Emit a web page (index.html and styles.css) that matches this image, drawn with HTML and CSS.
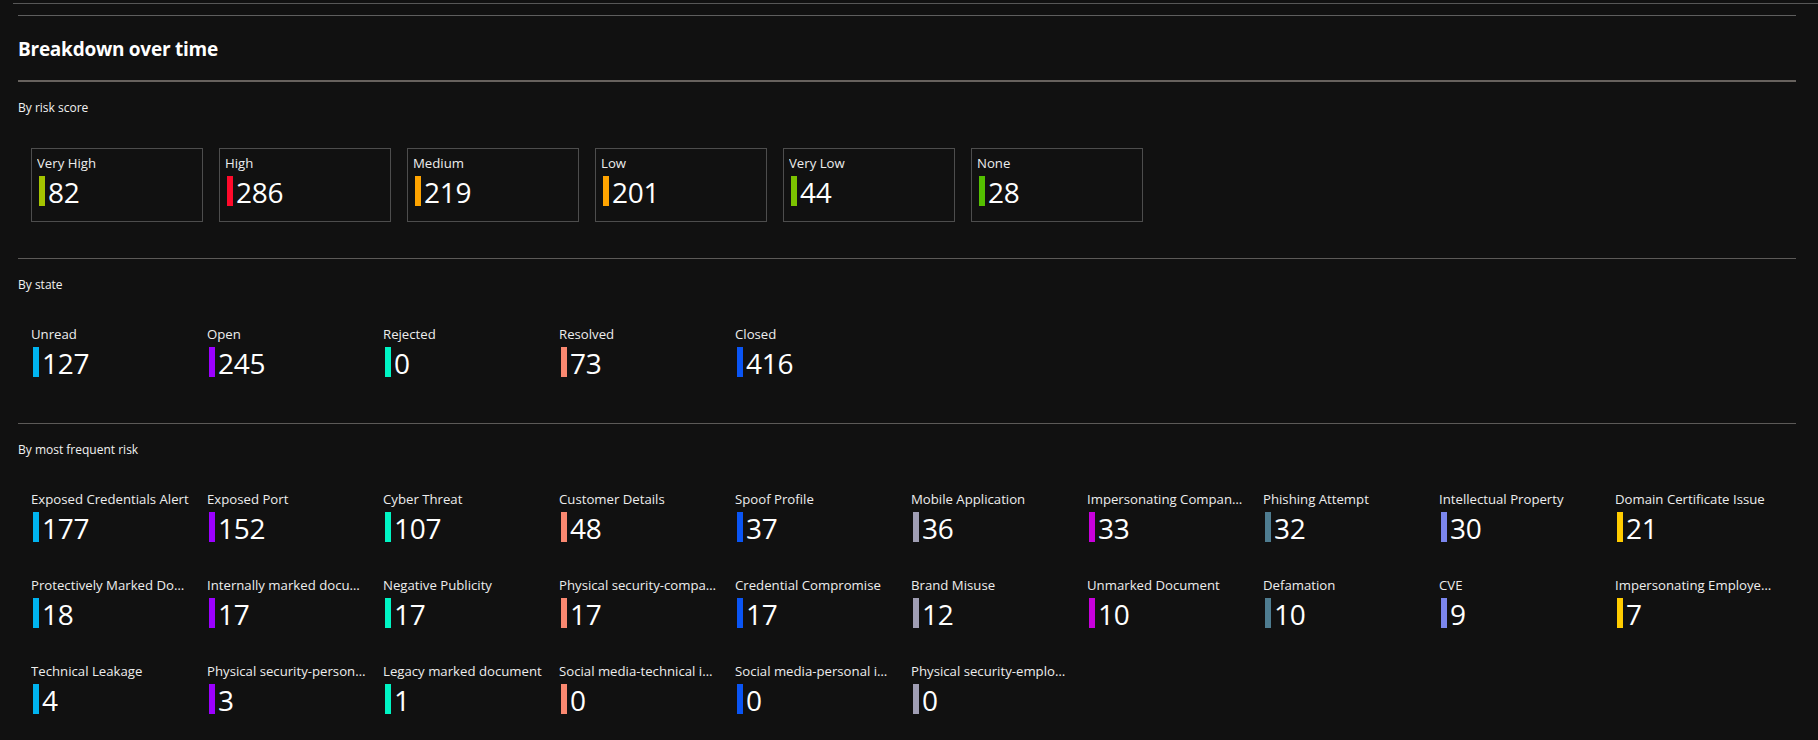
FILE: index.html
```html
<!DOCTYPE html>
<html lang="en">
<head>
<meta charset="utf-8">
<title>Breakdown over time</title>
<link rel="stylesheet" href="styles.css">
</head>
<body>
<div class="top-rule"></div>
<main class="panel">
  <h2 class="panel-title">Breakdown over time</h2>
  <div class="title-rule"></div>

  <section class="group">
    <h3 class="group-title">By risk score</h3>
    <div class="cards">
      <div class="card"><div class="label">Very High</div><div class="metric"><span class="bar c-vhigh"></span><span class="value">82</span></div></div>
      <div class="card"><div class="label">High</div><div class="metric"><span class="bar c-high"></span><span class="value">286</span></div></div>
      <div class="card"><div class="label">Medium</div><div class="metric"><span class="bar c-med"></span><span class="value">219</span></div></div>
      <div class="card"><div class="label">Low</div><div class="metric"><span class="bar c-low"></span><span class="value">201</span></div></div>
      <div class="card"><div class="label">Very Low</div><div class="metric"><span class="bar c-vlow"></span><span class="value">44</span></div></div>
      <div class="card"><div class="label">None</div><div class="metric"><span class="bar c-none"></span><span class="value">28</span></div></div>
    </div>
  </section>

  <section class="group group-state">
    <h3 class="group-title">By state</h3>
    <div class="items">
      <div class="item"><div class="label">Unread</div><div class="metric"><span class="bar k1"></span><span class="value">127</span></div></div>
      <div class="item"><div class="label">Open</div><div class="metric"><span class="bar k2"></span><span class="value">245</span></div></div>
      <div class="item"><div class="label">Rejected</div><div class="metric"><span class="bar k3"></span><span class="value">0</span></div></div>
      <div class="item"><div class="label">Resolved</div><div class="metric"><span class="bar k4"></span><span class="value">73</span></div></div>
      <div class="item"><div class="label">Closed</div><div class="metric"><span class="bar k5"></span><span class="value">416</span></div></div>
    </div>
  </section>

  <section class="group group-last">
    <h3 class="group-title">By most frequent risk</h3>
    <div class="items">
      <div class="item"><div class="label">Exposed Credentials Alert</div><div class="metric"><span class="bar k1"></span><span class="value">177</span></div></div>
      <div class="item"><div class="label">Exposed Port</div><div class="metric"><span class="bar k2"></span><span class="value">152</span></div></div>
      <div class="item"><div class="label">Cyber Threat</div><div class="metric"><span class="bar k3"></span><span class="value">107</span></div></div>
      <div class="item"><div class="label">Customer Details</div><div class="metric"><span class="bar k4"></span><span class="value">48</span></div></div>
      <div class="item"><div class="label">Spoof Profile</div><div class="metric"><span class="bar k5"></span><span class="value">37</span></div></div>
      <div class="item"><div class="label">Mobile Application</div><div class="metric"><span class="bar k6"></span><span class="value">36</span></div></div>
      <div class="item"><div class="label">Impersonating Compan…</div><div class="metric"><span class="bar k7"></span><span class="value">33</span></div></div>
      <div class="item"><div class="label">Phishing Attempt</div><div class="metric"><span class="bar k8"></span><span class="value">32</span></div></div>
      <div class="item"><div class="label">Intellectual Property</div><div class="metric"><span class="bar k9"></span><span class="value">30</span></div></div>
      <div class="item"><div class="label">Domain Certificate Issue</div><div class="metric"><span class="bar k10"></span><span class="value">21</span></div></div>

      <div class="item"><div class="label">Protectively Marked Do…</div><div class="metric"><span class="bar k1"></span><span class="value">18</span></div></div>
      <div class="item"><div class="label">Internally marked docu…</div><div class="metric"><span class="bar k2"></span><span class="value">17</span></div></div>
      <div class="item"><div class="label">Negative Publicity</div><div class="metric"><span class="bar k3"></span><span class="value">17</span></div></div>
      <div class="item"><div class="label">Physical security-compa…</div><div class="metric"><span class="bar k4"></span><span class="value">17</span></div></div>
      <div class="item"><div class="label">Credential Compromise</div><div class="metric"><span class="bar k5"></span><span class="value">17</span></div></div>
      <div class="item"><div class="label">Brand Misuse</div><div class="metric"><span class="bar k6"></span><span class="value">12</span></div></div>
      <div class="item"><div class="label">Unmarked Document</div><div class="metric"><span class="bar k7"></span><span class="value">10</span></div></div>
      <div class="item"><div class="label">Defamation</div><div class="metric"><span class="bar k8"></span><span class="value">10</span></div></div>
      <div class="item"><div class="label">CVE</div><div class="metric"><span class="bar k9"></span><span class="value">9</span></div></div>
      <div class="item"><div class="label">Impersonating Employe…</div><div class="metric"><span class="bar k10"></span><span class="value">7</span></div></div>

      <div class="item"><div class="label">Technical Leakage</div><div class="metric"><span class="bar k1"></span><span class="value">4</span></div></div>
      <div class="item"><div class="label">Physical security-person…</div><div class="metric"><span class="bar k2"></span><span class="value">3</span></div></div>
      <div class="item"><div class="label">Legacy marked document</div><div class="metric"><span class="bar k3"></span><span class="value">1</span></div></div>
      <div class="item"><div class="label">Social media-technical i…</div><div class="metric"><span class="bar k4"></span><span class="value">0</span></div></div>
      <div class="item"><div class="label">Social media-personal i…</div><div class="metric"><span class="bar k5"></span><span class="value">0</span></div></div>
      <div class="item"><div class="label">Physical security-emplo…</div><div class="metric"><span class="bar k6"></span><span class="value">0</span></div></div>
    </div>
  </section>
</main>
</body>
</html>
```

FILE: styles.css
```css
* {
  box-sizing: border-box;
}

html, body {
  margin: 0;
  padding: 0;
  background: #111111;
}

body {
  padding-top: 3px;
  font-family: "Open Sans", "Noto Sans", sans-serif;
  color: #f2f2f2;
  overflow: hidden;
}

.top-rule {
  margin-left: 13px;
  height: 1px;
  background: #575757;
}

.panel {
  margin: 11px 22px 0 18px;
  border-top: 1px solid #5e5e5e;
}

.panel-title {
  margin: 19px 0 0;
  font-size: 19px;
  line-height: 28px;
  font-weight: 700;
  color: #ffffff;
  letter-spacing: -0.25px;
}

.title-rule {
  margin-top: 17px;
  height: 2px;
  background: #67625e;
}

.group {
  padding-bottom: 36px;
  border-bottom: 1px solid #5c5a58;
}

.group-state {
  padding-bottom: 44px;
}

.group-last {
  border-bottom: 0;
  padding-bottom: 0;
}

.group-title {
  margin: 18px 0 32px;
  font-size: 12px;
  line-height: 16px;
  font-weight: 400;
  color: #f2f2f2;
}

.cards {
  display: flex;
  gap: 16px;
  padding-left: 13px;
}

.card {
  width: 172px;
  height: 74px;
  border: 1px solid #4d4d4d;
  padding: 5px 5px 0;
}

.items {
  display: grid;
  grid-template-columns: repeat(10, 160px);
  column-gap: 16px;
  row-gap: 32px;
  padding-left: 13px;
}

.label {
  font-size: 13.2px;
  line-height: 18px;
  color: #ededed;
  white-space: nowrap;
  overflow: hidden;
  text-overflow: ellipsis;
}

.item .label {
  width: 170px;
}

.metric {
  display: flex;
  align-items: flex-start;
  margin-top: 4px;
  height: 32px;
}

.bar {
  width: 6px;
  height: 30px;
  margin: 0 3px 0 2px;
  flex: none;
}

.value {
  font-size: 28px;
  line-height: 32px;
  font-weight: 500;
  letter-spacing: -0.3px;
  color: #ffffff;
}

/* risk score colours */
.c-vhigh { background: #a4c400; }
.c-high  { background: #ff0a2b; }
.c-med   { background: #ffa400; }
.c-low   { background: #ffa400; }
.c-vlow  { background: #7cc200; }
.c-none  { background: #54c000; }

/* series colours */
.k1  { background: #00b4f0; }
.k2  { background: #9b00ff; }
.k3  { background: #00f5c4; }
.k4  { background: #fa8870; }
.k5  { background: #0a55f5; }
.k6  { background: #a09eb4; }
.k7  { background: #c800dc; }
.k8  { background: #4e7c90; }
.k9  { background: #7b86ee; }
.k10 { background: #ffcc00; }
```
